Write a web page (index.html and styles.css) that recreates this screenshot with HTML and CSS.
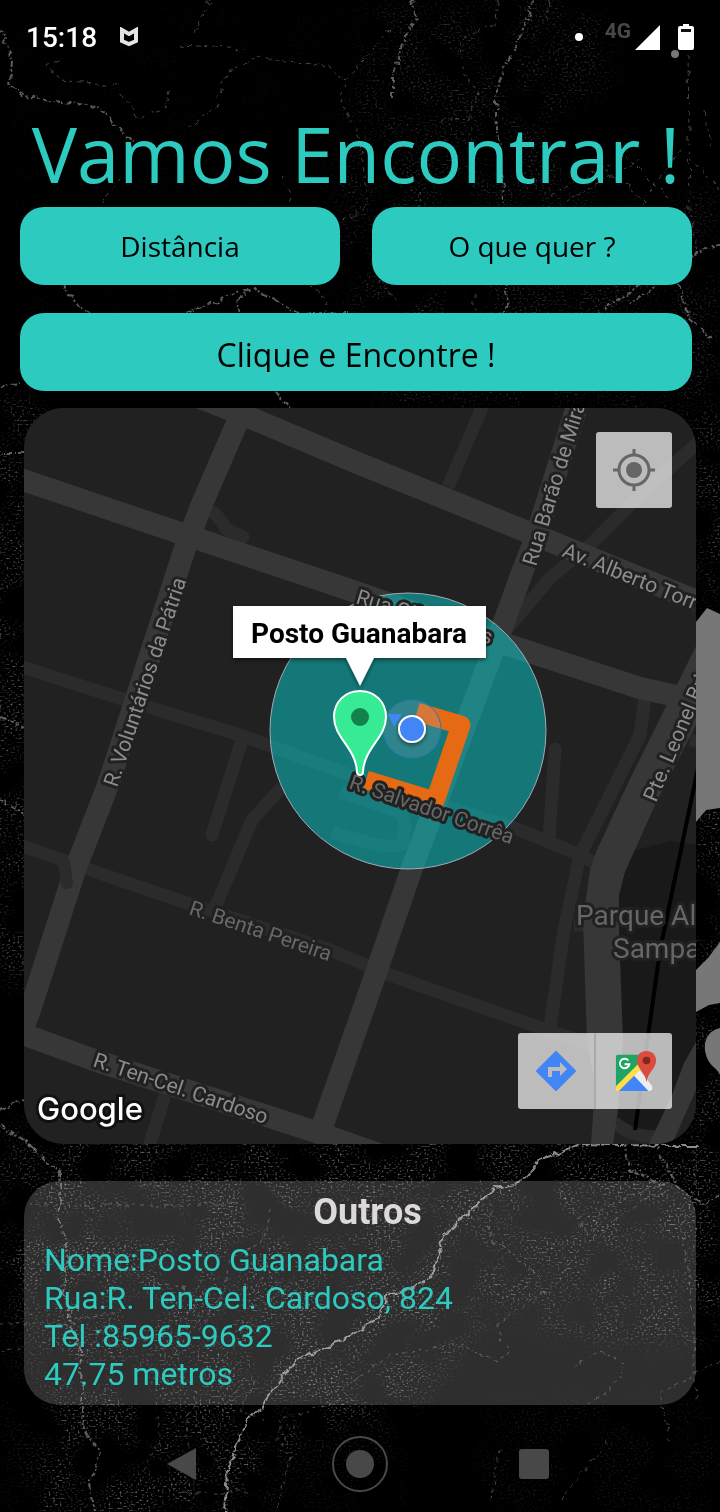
FILE: index.html
```html
<!DOCTYPE html>
<html lang="pt-BR">
<head>
<meta charset="utf-8">
<meta name="viewport" content="width=device-width, initial-scale=1">
<title>Vamos Encontrar !</title>
<link rel="stylesheet" href="styles.css">
</head>
<body>
<div class="screen">
  <svg class="backdrop" viewBox="0 0 720 1512" preserveAspectRatio="xMidYMid slice" aria-hidden="true">
    <defs>
      <filter id="speckle" x="-5%" y="-5%" width="110%" height="110%" color-interpolation-filters="sRGB">
        <feGaussianBlur in="SourceGraphic" stdDeviation="12" result="area"/>
        <feTurbulence type="fractalNoise" baseFrequency="0.45 0.5" numOctaves="1" seed="7"/>
        <feColorMatrix values="0 0 0 0 .5  0 0 0 0 .5  0 0 0 0 .5  0 0 0 4 -2.2" result="dots"/>
        <feTurbulence type="fractalNoise" baseFrequency="0.025" numOctaves="2" seed="3"/>
        <feColorMatrix values="0 0 0 0 1  0 0 0 0 1  0 0 0 0 1  0 0 0 4 -1.4" result="patch"/>
        <feComposite in="dots" in2="patch" operator="in" result="d"/>
        <feComposite in="d" in2="area" operator="in"/>
      </filter>
      <filter id="rough" x="-5%" y="-5%" width="110%" height="110%" color-interpolation-filters="sRGB">
        <feTurbulence type="fractalNoise" baseFrequency="0.09" numOctaves="2" seed="5"/>
        <feDisplacementMap in="SourceGraphic" scale="9" xChannelSelector="R" yChannelSelector="G"/>
      </filter>
    </defs>
    <g filter="url(#speckle)" fill="#fff">
      <path opacity=".4" d="M375 0H600L620 80L540 130L600 210L720 190V410H380L340 200Z"/>
      <path opacity=".06" d="M0 0H375V400H0Z"/>
      <path opacity=".7" d="M-20 400H40V980H-20ZM690 420H740V600H690ZM690 790H740V970H690ZM690 1010H740V1150H690Z"/>
      <path opacity=".8" d="M0 1130H720V1340H570L500 1300L440 1370L420 1400L300 1440L250 1530H30L60 1400L0 1250Z"/>
      <path opacity=".2" d="M0 1250H60V1512H0ZM300 1400H400V1512H300ZM480 1400H720V1512H480Z"/>
    </g>
    <g filter="url(#rough)">
      <path class="trail" d="M0 28L12 62L10 85L25 96L60 103L98 107L118 128L132 142"/>
      <path class="trail" d="M412 0L416 18L403 45L393 76V96"/>
      <path class="trail" d="M534 0L520 38L508 62L497 86V130L505 210L506 313"/>
      <path class="trail faint" d="M548 0L546 18M498 0L496 24L460 40L462 70L478 92L470 118L440 120"/>
      <path class="trail faint" d="M190 128L215 107L228 70L260 58L330 66L345 82L340 96L360 140L366 184L368 200L356 216L342 220"/>
      <path class="trail faint" d="M170 90L165 108L140 118L115 85L60 80L48 66L60 58M180 45L245 49M210 0L192 35M345 80L390 30"/>
      <path class="trail" d="M62 285L80 308L100 318M186 313L240 292L255 288L300 315L350 313M237 313L240 298L250 288"/>
      <path class="trail faint" d="M120 180L100 205M282 175L292 205M310 285L326 300L328 313M380 280L400 308"/>
      <path class="trail" d="M680 285L690 320L712 338M640 285L600 313M720 244L692 256L630 305"/>
      <path class="trail faint" d="M688 55L690 210L698 252M720 190L690 155M600 165L650 205M620 150L670 200M550 195L610 165M560 205L640 160M640 205L680 150M475 313V290M420 190V210M705 112L712 150"/>
      <path class="trail" d="M0 388L22 380M275 391L290 408M24 453H0M0 715L24 728M0 800L24 815M0 1110L24 1100M0 1125L35 1150"/>
      <path class="trail" d="M24 1140L60 1172L60 1225L68 1250L64 1290L72 1330L80 1350L84 1430L100 1452L90 1485L95 1512"/>
      <path class="trail strong" d="M700 1146L670 1146L580 1144L540 1160L520 1183L496 1188L478 1204L444 1234L430 1280L412 1288L386 1296L380 1316L350 1336L294 1362L282 1378L260 1408L242 1430L228 1470L225 1512"/>
      <path class="trail" d="M655 1142L680 1190L705 1205L720 1195M625 1144L630 1168L660 1185L668 1184"/>
      <path class="trail faint" d="M0 1324L70 1324L120 1310M0 1350L24 1346M140 1185H170M240 1205H30M330 1180L355 1205M270 1210L265 1240L230 1260L225 1290L200 1330"/>
      <path class="trail faint" d="M150 1280L190 1290L200 1320L170 1360L195 1390L185 1435L190 1450M255 1380L240 1410L262 1420"/>
      <path class="trail faint" d="M340 1400L280 1420L278 1440L290 1455L280 1500L275 1512M310 1396L340 1390L370 1370L390 1355L460 1345L498 1362L510 1350L500 1340V1322L560 1280L575 1255L590 1240"/>
      <path class="trail faint" d="M480 1180L490 1205L490 1240L510 1250L540 1280M560 1190L590 1240L640 1200L670 1190M594 1240L600 1210L670 1180M695 1150V1190L680 1230L690 1280L696 1400"/>
      <path class="trail faint" d="M690 1300H720M720 1360L660 1395L665 1420L670 1440M590 1405L620 1380L625 1365L600 1350L570 1370M490 1500L500 1450M560 1500L610 1440"/>
      <path class="trail faint" d="M155 1400L160 1440L145 1470M200 1430L220 1470M180 1492H250"/>
    </g>
    <path fill="#777" d="M696 622L707 608L720 614V808L706 810L696 822ZM696 970L708 958L720 942V1003L709 1005L696 1012ZM720 1028C708 1030 702 1043 706 1055C710 1068 716 1066 720 1075Z"/>
    <circle cx="675" cy="54" r="4" fill="#777"/>
  </svg>

  <header class="status">
    <time class="clock">15:18</time>
    <svg class="shield" viewBox="0 0 20 20" aria-hidden="true"><path d="M3 3L10 7L17 3V14L10 17L3 14Z" fill="none" stroke="#e4e4e4" stroke-width="4"/></svg>
    <span class="dot"></span>
    <span class="net">4G</span>
    <svg class="signal" viewBox="0 0 25 25" aria-hidden="true"><path d="M25 0V25H0Z" fill="#fff"/></svg>
    <svg class="battery" viewBox="0 0 16 26" aria-hidden="true"><path d="M5 0H11V2H14Q16 2 16 4V24Q16 26 14 26H2Q0 26 0 24V4Q0 2 2 2H5Z" fill="#fff"/><path d="M3 5H13V8H3Z" fill="#111"/></svg>
  </header>

  <main>
    <h1 class="title">Vamos Encontrar !</h1>
    <div class="actions">
      <button class="btn" type="button">Distância</button>
      <button class="btn" type="button">O que quer ?</button>
      <button class="btn btn-wide" type="button"><span class="btn-label">Clique e Encontre !</span></button>
    </div>

    <section class="map" aria-label="Mapa">
      <svg class="map-art" viewBox="24 408 672 736" preserveAspectRatio="xMidYMid slice">
        <defs>
          <filter id="lift" x="-10%" y="-20%" width="120%" height="150%"><feDropShadow dx="0" dy="2" stdDeviation="2" flood-opacity=".5"/></filter>
        </defs>
        <path fill="#212121" d="M24 408H696V1144H24Z"/>
        <path fill="#191919" d="M619 856L640 849L670 841L696 845V1050L655 1134L636 1134L614 1118Z"/>
        <g class="lane">
          <path d="M20 666L125 700L240 735L350 775L520 830L575 853L605 868"/>
          <path d="M242 740L212 835" stroke-linecap="round"/>
          <path d="M20 845L90 870L187 903L330 950L390 975L555 1033L606 1048"/>
          <path d="M282 787L252 820L215 908"/>
          <path d="M213 512Q220 518 226 529L243 537" stroke-linecap="round"/>
          <path d="M485 400L478 417L448 487"/>
          <path d="M704 437L640 495L590 545L550 578L508 628"/>
          <path d="M555 749L549 838" stroke-linecap="round"/>
          <path d="M645 698L640 735L620 775L580 855L564 930L549 1035"/>
          <path d="M340 792L400 812Q408 825 402 844Q394 852 332 832M574 925H590M690 740L700 742M165 1095L148 1150"/>
          <path d="M614 1122Q634 1140 665 1136"/>
        </g>
        <g class="road">
          <path d="M185 392L246 416L360 464L535 535L704 604"/>
          <path d="M20 479L180 533L350 590L508 645L640 688L700 701"/>
          <path d="M240 416L202 504L185 548L108 785L75 870L30 1010L22 1030"/>
          <path d="M579 400L535 540L523 570L501 630L412 868L377 970L321 1130"/>
          <path d="M20 1033L100 1062L310 1130L390 1158"/>
        </g>
        <path class="stub" d="M64 862L67 883"/>
        <path fill="#373737" d="M696 646L630 779L596 852L590 870L583 920L587 1040L595 1085L591 1144H613L618 1110L623 1040L619 930V895L625 872L655 805L696 725ZM696 1042L684 1063L672 1095L649 1144H672L696 1090Z"/>
        <path fill="none" stroke="#000" stroke-width="4" d="M698 768L660 950L635 1130"/>

        <circle cx="408" cy="731" r="138" fill="#06e2e2" fill-opacity=".45" stroke="#a3aab5" stroke-width="1"/>
        <path fill="none" stroke="#e56a13" stroke-width="19" stroke-linejoin="round" d="M417 712L461 725L435 801L366 780"/>

        <g class="street">
          <text transform="translate(117 788) rotate(-71.5)">R. Voluntários da Pátria</text>
          <text transform="translate(536 567) rotate(-73)">Rua Barão de Miracema</text>
          <text transform="translate(561 556) rotate(22)">Av. Alberto Torres</text>
          <text transform="translate(355 603) rotate(17)">Rua Gil de Góis</text>
          <text transform="translate(656 803) rotate(-67)">Pte. Leonel Brizola</text>
          <text transform="translate(92 1066) rotate(18.5)">R. Ten-Cel. Cardoso</text>
          <text class="dim" transform="translate(188 914) rotate(18.5)">R. Benta Pereira</text>
          <text class="dim" transform="translate(348 788) rotate(19)">R. Salvador Corrêa</text>
        </g>
        <g class="place">
          <text x="576" y="925">Parque Alberto</text>
          <text x="613" y="958">Sampaio</text>
        </g>

        <circle cx="412" cy="729" r="29" fill="#a0b4dc" fill-opacity=".2" stroke="#2879b4"/>
        <path fill="#4285f4" d="M388 714H402L394 727Z"/>
        <circle cx="412" cy="729" r="13" fill="#4285f4" stroke="#fff" stroke-width="2" filter="url(#lift)"/>
        <path fill="#37eb95" stroke="#fff" stroke-width="2" d="M360 691C345 691 334 702 334 717C334 738 356 748 357 772Q357 775 360 775Q363 775 363 772C364 748 386 738 386 717C386 702 375 691 360 691Z"/>
        <circle cx="360" cy="717" r="9" fill="#12814b"/>
        <path fill="#fff" filter="url(#lift)" d="M233 606H486V658H374L360 686L346 658H233Z"/>
        <text class="bubble" x="359" y="643" text-anchor="middle">Posto Guanabara</text>
        <text class="brand" x="37" y="1120">Google</text>
      </svg>

      <button class="map-btn locate" type="button" aria-label="Minha localização">
        <svg viewBox="0 0 42 42" aria-hidden="true"><circle cx="21" cy="21" r="8" fill="#666"/><circle cx="21" cy="21" r="15" fill="none" stroke="#666" stroke-width="3"/><path d="M21 0V5M21 37V42M0 21H5M37 21H42" stroke="#666" stroke-width="3"/></svg>
      </button>
      <div class="map-tools">
        <button class="map-btn" type="button" aria-label="Rotas">
          <svg viewBox="0 0 42 42" aria-hidden="true"><path d="M21 2L40 21L21 40L2 21Z" fill="#4285f4" stroke="#4285f4" stroke-width="2" stroke-linejoin="round"/><path d="M13 27V17H25V12L32 19L25 26V21H17V27Z" fill="#bdbdbd"/></svg>
        </button>
        <button class="map-btn" type="button" aria-label="Abrir no Google Maps">
          <svg viewBox="0 0 44 44" aria-hidden="true"><path d="M3 5H28V18L1 41V7Q1 5 3 5Z" fill="#1fa463"/><path d="M20 25L36 43H4Z" fill="#4285f4"/><path d="M20 27L25 20L39 38V41L37 43H35Z" fill="#eee"/><path d="M1 38L24 15L28 19L4 43H2L1 42Z" fill="#ffde48"/><path d="M14 11A5 5 0 1 0 15 15H10" fill="none" stroke="#fff" stroke-width="2"/><path d="M33 1C27 1 23 5 23 11C23 20 32 23 33 34C34 23 43 20 43 11C43 5 39 1 33 1Z" fill="#dd4b3e"/><circle cx="33" cy="11" r="4" fill="#7c2922"/></svg>
        </button>
      </div>
    </section>

    <section class="info">
      <h2 class="info-title">Outros</h2>
      <p>Nome:Posto Guanabara</p>
      <p>Rua:R. Ten-Cel. Cardoso, 824</p>
      <p>Tel :85965-9632</p>
      <p>47.75 metros</p>
    </section>
  </main>

  <nav class="system-nav" aria-label="Sistema">
    <button type="button" aria-label="Voltar"><svg viewBox="0 0 56 56"><path d="M11 28L40 12V44Z" fill="#484848"/></svg></button>
    <button type="button" aria-label="Início"><svg viewBox="0 0 56 56"><circle cx="28" cy="28" r="27" fill="none" stroke="#484848" stroke-width="2"/><circle cx="28" cy="28" r="14" fill="#484848"/></svg></button>
    <button type="button" aria-label="Recentes"><svg viewBox="0 0 56 56"><rect x="11" y="13" width="30" height="30" rx="3" fill="#484848"/></svg></button>
  </nav>
</div>
</body>
</html>
```
FILE: styles.css
```css
* { box-sizing: border-box; }
body { margin: 0; background: #000; font-family: Roboto, "Liberation Sans", sans-serif; }
button { border: 0; padding: 0; font: inherit; cursor: pointer; }
.screen { position: relative; min-height: 100vh; display: flex; flex-direction: column; overflow: hidden; }
.backdrop { position: absolute; inset: 0; width: 100%; height: 100%; }
.trail { fill: none; stroke: #999; stroke-width: 2; stroke-dasharray: 5 2 2 3; opacity: .6; }
.trail.strong { opacity: .9; stroke-dasharray: 9 1; }
.trail.faint { stroke-width: 1; opacity: .45; stroke-dasharray: 4 4; }
.status, main, .system-nav { position: relative; }

.status { display: flex; align-items: center; height: 74px; padding: 0 26px; color: #fff; }
.clock { font-size: 28px; font-weight: 500; }
.shield { width: 20px; height: 20px; margin-left: 22px; }
.dot { width: 8px; height: 8px; margin-left: auto; border-radius: 50%; background: #fff; }
.net { margin: 0 4px 12px 22px; color: #484848; font-size: 21px; font-weight: 700; line-height: 20px; }
.signal { width: 25px; height: 25px; }
.battery { width: 16px; height: 26px; margin-left: 18px; }

.title { margin: 32px 0 5px; padding-right: 8px; text-align: center; font: 400 76px/96px "Open Sans", "Noto Sans", sans-serif; color: #2dcabf; white-space: nowrap; }
.actions { display: grid; grid-template-columns: 1fr 1fr; gap: 28px 32px; padding: 0 28px 0 20px; }
.btn { height: 78px; border-radius: 24px; background: #2dcabf; color: #000; font: 400 28px/38px "Open Sans", "Noto Sans", sans-serif; }
.btn-wide { grid-column: 1 / -1; padding-top: 4px; font-size: 32px; }
.btn-label { display: block; height: 36px; overflow: hidden; }

.map { position: relative; margin: 17px 24px 0; aspect-ratio: 672 / 736; border-radius: 40px; overflow: hidden; background: #212121; }
.map-art { display: block; width: 100%; height: 100%; }
.lane { fill: none; stroke: #2b2b2b; stroke-width: 13; stroke-linejoin: round; }
.road { fill: none; stroke: #373737; stroke-width: 22; }
.stub { fill: none; stroke: #2b2b2b; stroke-width: 12; stroke-linecap: round; }
.street text, .place text { fill: #8c8c8c; stroke: #212121; stroke-width: 6px; stroke-linejoin: round; paint-order: stroke; font-size: 21px; }
.street .dim { fill: #686868; }
.place text { fill: #666; font-size: 28px; }
.bubble { font-size: 28px; font-weight: 700; fill: #000; }
.brand { font-family: Inter, sans-serif; font-size: 31px; font-weight: 500; fill: #fff; stroke: #111; stroke-width: 6px; paint-order: stroke; }
.map-btn { display: grid; place-items: center; width: 76px; height: 76px; background: none; }
.map-btn svg { width: 42px; height: 42px; }
.locate, .map-tools { position: absolute; right: 24px; border-radius: 3px; background: rgba(255, 255, 255, .7); }
.locate { top: 24px; }
.map-tools { bottom: 35px; display: flex; }
.map-tools .map-btn + .map-btn { width: 78px; padding-left: 4px; border-left: 2px solid #aaa; }

.info { margin: 37px 24px 0; padding: 10px 20px 12px; border-radius: 36px; background: rgba(255, 255, 255, .18); color: #2dcabf; font-size: 32px; line-height: 38px; }
.info p { margin: 0; }
.info-title { margin: 0 0 8px; padding-left: 15px; text-align: center; color: #ddd8dc; font-size: 36px; line-height: 42px; font-weight: 700; }

.system-nav { display: flex; justify-content: center; gap: 120px; padding: 31px 0 20px; }
.system-nav button { width: 56px; height: 56px; background: none; }
.system-nav svg { display: block; width: 56px; height: 56px; }
```
